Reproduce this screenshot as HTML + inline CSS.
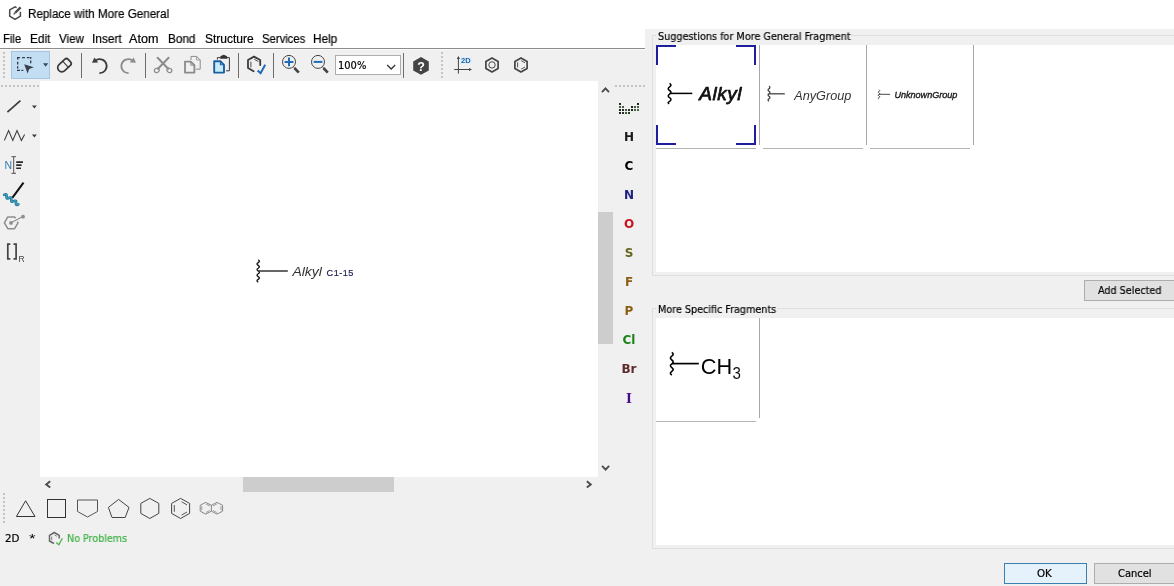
<!DOCTYPE html>
<html><head><meta charset="utf-8"><title>Replace with More General</title>
<style>
html,body{margin:0;padding:0;}
body{width:1174px;height:586px;overflow:hidden;background:#f0f0f0;position:relative;font-family:"Liberation Sans",sans-serif;font-size:12px;color:#000;}
.a{position:absolute;}
.t{position:absolute;white-space:nowrap;line-height:1;transform-origin:0 50%;will-change:transform;-webkit-text-stroke:0.2px currentColor;}
svg{position:absolute;left:0;top:0;overflow:visible;}
.el{position:absolute;left:613px;width:32px;text-align:center;font-family:"DejaVu Sans","Liberation Sans",sans-serif;font-weight:bold;font-size:12px;line-height:1;will-change:transform;}
.sep{position:absolute;width:1px;top:53px;height:25px;background:#6e6e6e;}
.gripv{position:absolute;width:2px;background:repeating-linear-gradient(to bottom,#c4c4c4 0 2px,transparent 2px 4px);}
.griph{position:absolute;height:2px;background:repeating-linear-gradient(to right,#c4c4c4 0 2px,transparent 2px 4px);}
.btn{position:absolute;box-sizing:border-box;border:1px solid #adadad;background:#e1e1e1;}
.vl{position:absolute;width:1px;height:100px;background:#a8a8a8;}
.hl{position:absolute;height:1px;width:100px;background:#b4b4b4;}
</style></head><body>
<!-- title bar -->
<div class="a" id="titlebar" style="left:0;top:0;width:1174px;height:29px;background:#fff;"></div>
<!-- menu bar -->
<div class="a" id="menubar" style="left:0;top:29px;width:645px;height:19px;background:#fff;"></div>
<div class="a" style="left:0;top:48px;width:645px;height:1px;background:#8c8c8c;"></div>
<div class="a" style="left:0;top:49px;width:645px;height:1px;background:#fafafa;"></div>
<!-- top toolbar -->
<div class="gripv" style="left:3px;top:52px;height:27px;"></div>
<div class="a" id="selbtn" style="left:11px;top:51px;width:39px;height:28px;background:#c3ddf3;box-sizing:border-box;border:1px solid #a4c6e6;"></div>
<div class="sep" style="left:81px;"></div>
<div class="sep" style="left:145px;"></div>
<div class="sep" style="left:238px;"></div>
<div class="sep" style="left:273px;"></div>
<div class="sep" style="left:403px;"></div>
<div class="a" id="combo" style="left:335px;top:55px;width:66px;height:20px;box-sizing:border-box;border:1px solid #adadad;background:#fff;"></div>
<div class="gripv" style="left:441px;top:52px;height:27px;"></div>
<!-- left toolbar -->
<div class="griph" style="left:1px;top:85px;width:38px;"></div>
<!-- canvas -->
<div class="a" id="canvas" style="left:40px;top:81px;width:558px;height:396px;background:#fff;"></div>
<!-- scrollbars -->
<div class="a" id="vthumb" style="left:598px;top:212px;width:15px;height:132px;background:#cdcdcd;"></div>
<div class="a" id="hthumb" style="left:243px;top:477px;width:151px;height:15px;background:#cdcdcd;"></div>
<!-- atom toolbar -->
<div class="griph" style="left:615px;top:85px;width:30px;"></div>
<div class="el" style="top:131px;color:#1a1a1a;">H</div>
<div class="el" style="top:160px;color:#000;">C</div>
<div class="el" style="top:189px;color:#20207e;">N</div>
<div class="el" style="top:218px;color:#c8141e;">O</div>
<div class="el" style="top:247px;color:#64641a;">S</div>
<div class="el" style="top:276px;color:#8c5e14;">F</div>
<div class="el" style="top:305px;color:#8c5e14;">P</div>
<div class="el" style="top:334px;color:#188418;">Cl</div>
<div class="el" style="top:363px;color:#5c2a2a;">Br</div>
<div class="el" style="top:393px;color:#4a0a8c;font-family:'DejaVu Serif','Liberation Serif',serif;font-size:12.5px;">I</div>
<!-- bottom toolbar -->
<div class="gripv" style="left:3px;top:493px;height:30px;"></div>
<!-- right panel: group boxes -->
<div class="a" id="grp1" style="left:652px;top:35px;width:530px;height:241px;box-sizing:border-box;border:1px solid #dfdfdf;"></div>
<div class="a" style="left:656px;top:30px;width:195px;height:14px;background:#f0f0f0;"></div>
<div class="a" id="list1" style="left:656px;top:45px;width:518px;height:227px;background:#fff;"></div>
<div class="a" id="grp2" style="left:652px;top:308px;width:530px;height:241px;box-sizing:border-box;border:1px solid #dfdfdf;"></div>
<div class="a" style="left:656px;top:302px;width:121px;height:14px;background:#f0f0f0;"></div>
<div class="a" id="list2" style="left:656px;top:318px;width:518px;height:227px;background:#fff;"></div>
<div class="vl" style="left:759px;top:45px;"></div><div class="hl" style="left:656px;top:148px;"></div>
<div class="vl" style="left:866px;top:45px;"></div><div class="hl" style="left:763px;top:148px;"></div>
<div class="vl" style="left:973px;top:45px;"></div><div class="hl" style="left:870px;top:148px;"></div>
<div class="vl" style="left:759px;top:318px;"></div><div class="hl" style="left:656px;top:421px;"></div>
<!-- buttons -->
<div class="btn" style="left:1084px;top:280px;width:100px;height:21px;"></div>
<div class="btn" style="left:1004px;top:563px;width:83px;height:21px;border-color:#3c7fb1;background:#e5f1fb;"></div>
<div class="btn" style="left:1094px;top:563px;width:90px;height:21px;"></div>
<div class="t" id="star" style="left:28.8px;top:532px;font-size:13.5px;transform:scaleX(1.25);-webkit-text-stroke:0;">*</div>
<div class="t" style="left:27.9px;top:8px;font-size:12px;transform:scaleX(0.971);">Replace with More General</div>
<div class="t" style="left:2.9px;top:33px;font-size:12px;transform:scaleX(0.939);">File</div>
<div class="t" style="left:29.7px;top:33px;font-size:12px;transform:scaleX(0.984);">Edit</div>
<div class="t" style="left:58.5px;top:33px;font-size:12px;transform:scaleX(0.964);">View</div>
<div class="t" style="left:91.8px;top:33px;font-size:12px;transform:scaleX(0.986);">Insert</div>
<div class="t" style="left:128.6px;top:33px;font-size:12px;transform:scaleX(1.048);">Atom</div>
<div class="t" style="left:167.9px;top:33px;font-size:12px;transform:scaleX(0.978);">Bond</div>
<div class="t" style="left:204.7px;top:33px;font-size:12px;">Structure</div>
<div class="t" style="left:261.5px;top:33px;font-size:12px;transform:scaleX(0.941);">Services</div>
<div class="t" style="left:312.8px;top:33px;font-size:12px;transform:scaleX(0.978);">Help</div>
<div class="t" style="left:338.4px;top:60px;font-size:11px;font-family:'DejaVu Sans Condensed','Liberation Sans',sans-serif;">100%</div>
<div class="t" style="left:657.6px;top:31px;font-size:11px;transform:scaleX(0.976);font-family:'DejaVu Sans Condensed','Liberation Sans',sans-serif;">Suggestions for More General Fragment</div>
<div class="t" style="left:657.5px;top:304px;font-size:11px;transform:scaleX(0.971);font-family:'DejaVu Sans Condensed','Liberation Sans',sans-serif;">More Specific Fragments</div>
<div class="t" style="left:1097.9px;top:285px;font-size:11px;transform:scaleX(0.973);font-family:'DejaVu Sans Condensed','Liberation Sans',sans-serif;">Add Selected</div>
<div class="t" style="left:1036.8px;top:568px;font-size:11px;transform:scaleX(1.038);font-family:'DejaVu Sans Condensed','Liberation Sans',sans-serif;">OK</div>
<div class="t" style="left:1117.6px;top:568px;font-size:11px;font-family:'DejaVu Sans Condensed','Liberation Sans',sans-serif;">Cancel</div>
<div class="t" style="left:4.7px;top:533px;font-size:11px;transform:scaleX(1.042);font-family:'DejaVu Sans Condensed','Liberation Sans',sans-serif;">2D</div>
<div class="t" style="left:66.5px;top:533px;font-size:11px;transform:scaleX(0.966);color:#3cb043;font-family:'DejaVu Sans Condensed','Liberation Sans',sans-serif;">No Problems</div>
<svg id="icons" width="1174" height="586" viewBox="0 0 1174 586">
<!-- title icon -->
<g id="ticon" transform="translate(0 0.6)" fill="none" stroke="#484848" stroke-linejoin="round" stroke-linecap="butt">
<path d="M16.6 7 L15.1 6.2 L9.7 9.3 L9.7 15.6 L15.1 18.7 L20.4 15.6 L20.4 11.2" stroke-width="1.5"/>
<path d="M15.2 12.2 L20.6 6.8" stroke-width="2.3"/>
<path d="M13.2 14.2 L14.2 11.6 L15.8 13.2 Z" fill="#484848" stroke="none"/>
</g>
<!-- select tool -->
<g id="i-select">
<path d="M17 57.7 H19.9 M22.1 57.7 H24.9 M26.9 57.7 H29.5 M30 57.7 H31.3 M17.65 57.05 V59.6 M17.65 61.8 V64.5 M17.65 66.2 V68.5 M17.65 69.7 V71 M17 70.4 H20 M21.4 70.4 H23.3 M30.7 57.05 V58.7 M30.7 60.6 V63.2" fill="none" stroke="#2e3a48" stroke-width="1.3"/>
<path d="M24.2 64.3 L33.8 67.2 L29.2 69 L27.6 73.4 Z" fill="#39414d"/>
<path d="M43 63.2 L48.2 63.2 L45.6 66.8 Z" fill="#2d4a6b"/>
</g>
<!-- eraser -->
<g id="i-eraser" transform="translate(64.1 65.6) rotate(-43)" fill="none" stroke="#3a3a3a" stroke-width="1.7">
<path d="M-3 -4.2 L4.7 -4.2 Q7.2 -4.2 7.2 -1.7 L7.2 1.7 Q7.2 4.2 4.7 4.2 L-3 4.2 A4.2 4.2 0 0 1 -3 -4.2 Z"/>
<path d="M1.9 -4.2 L1.9 4.2" stroke-width="1.1"/>
</g>
<!-- undo -->
<g id="i-undo">
<path d="M95.9 60.2 A7 7 0 1 1 99.4 73.1" fill="none" stroke="#3c3c3c" stroke-width="1.8"/>
<path d="M92 62.8 L94.4 57.4 L98.2 62.6 Z" fill="#3c3c3c"/>
</g>
<!-- redo -->
<g id="i-redo">
<path d="M132.1 60.2 A7 7 0 1 0 128.6 73.1" fill="none" stroke="#8c8c8c" stroke-width="1.8"/>
<path d="M136 62.8 L133.6 57.4 L129.8 62.6 Z" fill="#8c8c8c"/>
</g>
<!-- cut -->
<g id="i-cut" fill="none" stroke="#8c8c8c">
<path d="M157.6 57.8 L168.2 68.8 M168.6 57.8 L158 68.8" stroke-width="2" stroke-linecap="round"/>
<ellipse cx="156.8" cy="70.4" rx="2.5" ry="2.1" stroke-width="1.2" transform="rotate(-30 156.8 70.4)"/>
<ellipse cx="169.4" cy="70.4" rx="2.5" ry="2.1" stroke-width="1.2" transform="rotate(30 169.4 70.4)"/>
</g>
<!-- copy -->
<g id="i-copy" fill="none" stroke="#8a8a8a" stroke-linejoin="round">
<path d="M191 60 L191 56.4 L196.6 56.4 L200.2 60 L200.2 69.2 L196 69.2" stroke-width="1"/>
<path d="M196.6 56.4 L196.6 60 L200.2 60" stroke-width="0.8"/>
<path d="M185 61.6 L190.8 61.6 L194.4 65.2 L194.4 72.6 L185 72.6 Z" stroke-width="1.8" fill="#f0f0f0"/>
<path d="M190.8 61.6 L190.8 65.2 L194.4 65.2" stroke-width="1"/>
</g>
<!-- paste -->
<g id="i-paste" fill="none" stroke-linejoin="round">
<path d="M217.4 59.6 L217.4 57.6 L220.6 57.6 M226.8 57.6 L229.4 57.6 L229.4 70.8 L226 70.8" stroke="#3a3a3a" stroke-width="1"/>
<path d="M220.2 58.8 L220.2 56.8 Q220.8 55.6 222.2 55.6 Q223.7 53.8 225.2 55.6 Q226.6 55.6 227.2 56.8 L227.2 58.8 Z" fill="#333" stroke="none"/>
<path d="M214.2 61.2 L220.4 61.2 L224 64.8 L224 72.6 L214.2 72.6 Z" stroke="#1b5fa3" stroke-width="1.9" fill="#c9ecfd"/>
<path d="M220.4 61.2 L220.4 64.8 L224 64.8" stroke="#1b5fa3" stroke-width="1.1"/>
</g>
<!-- check structure -->
<g id="i-check" fill="none" stroke-linejoin="round" stroke-linecap="round">
<path d="M260.2 65 L260.2 60 L254 56.6 L248 60 L248 68 L253.6 71.2" stroke="#3a3a3a" stroke-width="1.8"/>
<path d="M250.9 62 L250.9 67 M254.6 59.4 L258 61.4" stroke="#3a3a3a" stroke-width="0.9"/>
<path d="M257.6 70.4 L260.6 73.2 L265.2 64.8" stroke="#1e6bb8" stroke-width="2" stroke-linecap="butt" stroke-linejoin="miter"/>
</g>
<!-- zoom in -->
<g id="i-zin" fill="none">
<circle cx="289" cy="61.9" r="6.5" stroke="#444" stroke-width="1"/>
<path d="M284.6 61.9 L293.4 61.9 M289 57.5 L289 66.3" stroke="#1e6bb8" stroke-width="2"/>
<path d="M294.4 68 L298.8 72.6" stroke="#444" stroke-width="2.6"/>
<path d="M293.2 66.6 L294.8 68.2" stroke="#444" stroke-width="1"/>
</g>
<!-- zoom out -->
<g id="i-zout" fill="none">
<circle cx="318" cy="61.9" r="6.5" stroke="#444" stroke-width="1"/>
<path d="M313.6 61.9 L322.4 61.9" stroke="#1e6bb8" stroke-width="2"/>
<path d="M323.4 68 L327.8 72.6" stroke="#444" stroke-width="2.6"/>
<path d="M322.2 66.6 L323.8 68.2" stroke="#444" stroke-width="1"/>
</g>
<!-- combo chevron -->
<path d="M387.2 65 L391.2 69 L395.2 65" fill="none" stroke="#333" stroke-width="1.3"/>
<!-- help -->
<g id="i-help">
<path d="M421 57 L428.8 61.4 L428.8 70.4 L421 74.8 L413.2 70.4 L413.2 61.4 Z" fill="#444"/>
<text x="421" y="70.6" text-anchor="middle" font-family="Liberation Sans, sans-serif" font-weight="bold" font-size="12.5" fill="#fff">?</text>
</g>
<!-- 2D clean -->
<g id="i-2d">
<rect x="460" y="57" width="12" height="7" fill="#e0f1fb"/>
<path d="M458.4 73.6 L458.4 57.2 M454.2 69.5 L471 69.5" fill="none" stroke="#444" stroke-width="1"/>
<path d="M456.8 59 L458.4 56 L460 59 Z M469 68 L472 69.5 L469 71 Z" fill="#444"/>
<text x="461" y="62.9" font-family="Liberation Sans, sans-serif" font-weight="bold" font-size="6.6" fill="#1f5fa6" textLength="9.6" lengthAdjust="spacingAndGlyphs">2D</text>
</g>
<!-- aromatize -->
<g id="i-arom" fill="none" stroke="#444">
<path d="M492 57.9 L498.1 61.4 L498.1 68.4 L492 71.9 L485.9 68.4 L485.9 61.4 Z" stroke-width="1.7" stroke-linejoin="round"/>
<circle cx="492" cy="64.9" r="3.2" stroke-width="1"/>
</g>
<!-- dearomatize -->
<g id="i-dearom" fill="none" stroke="#444">
<path d="M521 57.9 L527.1 61.4 L527.1 68.4 L521 71.9 L514.9 68.4 L514.9 61.4 Z" stroke-width="1.7" stroke-linejoin="round"/>
<path d="M517.6 62.4 L517.6 67.4 M521.2 60.6 L525 62.8 M521.2 69.2 L525 67" stroke-width="0.9"/>
</g>
<!-- left toolbar -->
<g id="i-bond">
<path d="M7.4 112.2 L20.4 100.6" stroke="#3c3c3c" stroke-width="1.7" fill="none"/>
<path d="M32 105.4 L36.8 105.4 L34.4 108.4 Z" fill="#3c3c3c"/>
</g>
<g id="i-chain">
<path d="M4.4 140.4 L8.6 130.6 L12.8 140.4 L17 130.6 L21.4 140.4 L24.6 134.6" stroke="#3c3c3c" stroke-width="1.1" fill="none" stroke-linejoin="miter"/>
<path d="M32 134.4 L36.8 134.4 L34.4 137.4 Z" fill="#3c3c3c"/>
</g>
<g id="i-text">
<text x="4.4" y="168.8" font-family="Liberation Sans, sans-serif" font-size="10.5" fill="#2f7db5">N</text>
<path d="M13.7 156.8 L13.7 173.2 M11.4 156.7 L16 156.7 M11.4 173.3 L16 173.3" stroke="#5a5050" stroke-width="1" fill="none"/>
<path d="M16.2 162.1 L23 162.1 M16.2 165.1 L21.6 165.1 M16.2 168.2 L21 168.2" stroke="#2a2a2a" stroke-width="1.6" fill="none"/>
</g>
<g id="i-attach">
<path d="M23.5 182.6 L12.3 197.8" stroke="#111" stroke-width="2" fill="none"/>
<path d="M4.2 194.8 L4.7 194.6 L5.2 194.4 L5.6 194.3 L5.9 194.3 L6.2 194.4 L6.4 194.6 L6.5 194.9 L6.6 195.3 L6.6 195.9 L6.6 196.4 L6.5 196.9 L6.5 197.5 L6.6 197.9 L6.7 198.2 L6.9 198.4 L7.2 198.5 L7.5 198.5 L8.0 198.4 L8.4 198.2 L8.9 198.0 L9.4 197.8 L9.9 197.6 L10.3 197.5 L10.7 197.5 L11.0 197.6 L11.2 197.8 L11.3 198.1 L11.3 198.5 L11.3 199.1 L11.3 199.6 L11.3 200.1 L11.3 200.7 L11.3 201.1 L11.4 201.4 L11.6 201.6 L11.9 201.7 L12.3 201.7 L12.7 201.6 L13.2 201.4 L13.7 201.2 L14.2 201.0 L14.6 200.8 L15.1 200.7 L15.4 200.7 L15.7 200.8 L15.9 201.0 L16.0 201.3 L16.1 201.7 L16.1 202.3 L16.0 202.8 L16.0 203.3 L16.0 203.9 L16.1 204.3 L16.2 204.6 L16.4 204.8 L16.7 204.9 L17.0 204.9 L17.4 204.8 L17.9 204.6 L18.4 204.4" stroke="#1f7594" stroke-width="2.6" fill="none" stroke-linecap="round" stroke-linejoin="round"/>
<path d="M4.2 194.8 L4.7 194.6 L5.2 194.4 L5.6 194.3 L5.9 194.3 L6.2 194.4 L6.4 194.6 L6.5 194.9 L6.6 195.3 L6.6 195.9 L6.6 196.4 L6.5 196.9 L6.5 197.5 L6.6 197.9 L6.7 198.2 L6.9 198.4 L7.2 198.5 L7.5 198.5 L8.0 198.4 L8.4 198.2 L8.9 198.0 L9.4 197.8 L9.9 197.6 L10.3 197.5 L10.7 197.5 L11.0 197.6 L11.2 197.8 L11.3 198.1 L11.3 198.5 L11.3 199.1 L11.3 199.6 L11.3 200.1 L11.3 200.7 L11.3 201.1 L11.4 201.4 L11.6 201.6 L11.9 201.7 L12.3 201.7 L12.7 201.6 L13.2 201.4 L13.7 201.2 L14.2 201.0 L14.6 200.8 L15.1 200.7 L15.4 200.7 L15.7 200.8 L15.9 201.0 L16.0 201.3 L16.1 201.7 L16.1 202.3 L16.0 202.8 L16.0 203.3 L16.0 203.9 L16.1 204.3 L16.2 204.6 L16.4 204.8 L16.7 204.9 L17.0 204.9 L17.4 204.8 L17.9 204.6 L18.4 204.4" stroke="#4fb6d6" stroke-width="1" fill="none" stroke-linecap="round" stroke-linejoin="round"/>
</g>
<g id="i-rgroup" stroke="#8e8e8e" fill="none">
<path d="M15.6 218.2 L14.6 216.9 L7.8 216.9 L4.4 222.8 L7.8 228.7 L14.6 228.7 L18 222.8 L17.4 221.6" stroke-width="1.5" stroke-linejoin="round"/>
<path d="M11 222.8 L23 216.6" stroke-width="1.1"/>
<circle cx="11" cy="222.9" r="1.9" fill="#8e8e8e" stroke="none"/>
<circle cx="23" cy="216.7" r="1.9" fill="#8e8e8e" stroke="none"/>
</g>
<g id="i-bracket">
<path d="M10.3 244.2 L7.8 244.2 L7.8 258.8 L10.3 258.8 M13.5 244.2 L16.1 244.2 L16.1 258.8 L13.5 258.8" stroke="#444" stroke-width="1.7" fill="none"/>
<text x="18.6" y="261.8" font-family="Liberation Sans, sans-serif" font-size="8.5" fill="#444">R</text>
</g>
<!-- scroll arrows -->
<g fill="none" stroke="#4c4c4c" stroke-width="1.9">
<path d="M602 92.2 L605.5 88.4 L609 92.2"/>
<path d="M602.1 465.8 L605.6 469.6 L609.1 465.8"/>
<path d="M50.2 481.2 L46.2 484.4 L50.2 487.6"/>
<path d="M586.8 481.2 L590.8 484.4 L586.8 487.6"/>
</g>
<!-- bottom toolbar shapes -->
<g id="shapes" fill="none" stroke="#333" stroke-width="1">
<path d="M25.6 500.8 L35 516.5 L16.4 516.5 Z"/>
<rect x="47.5" y="499.5" width="18" height="18"/>
<path d="M77.5 500 L97.5 500 L97.5 511.5 L87.5 517 L77.5 511.5 Z" stroke="#555"/>
<path d="M118.6 499.4 L129 507.4 L125.2 517.5 L112 517.5 L108.4 507.4 Z" stroke="#444"/>
<path d="M149.8 498.4 L158.8 503.4 L158.8 513.4 L149.8 518.5 L140.8 513.4 L140.8 503.4 Z" stroke="#444"/>
<path d="M180.6 498.4 L189.6 503.4 L189.6 513.4 L180.6 518.5 L171.6 513.4 L171.6 503.4 Z" stroke="#444"/>
<path d="M174.3 505 L174.3 511.8 M181.6 501.8 L187 504.9 M181.6 515.1 L187 512" stroke="#444" stroke-width="0.9"/>
<g stroke="#7a7a7a" stroke-width="0.9">
<path d="M205.7 502.4 L211.4 505.3 L211.4 511.2 L205.7 514.1 L200.2 511.2 L200.2 505.3 Z"/>
<path d="M211.4 505.3 L217 502.4 L222.6 505.3 L222.6 511.2 L217 514.1 L211.4 511.2"/>
<path d="M201.8 506.2 L201.8 510.3 M206 504 L209.8 506 M206 512.5 L209.8 510.5 M221 506.2 L221 510.3 M216.8 504 L213 506 M216.8 512.5 L213 510.5" stroke-width="0.7"/>
</g>
</g>
<!-- status icon -->
<g id="i-status" fill="none" stroke-linejoin="round">
<path d="M59.2 538.6 L59.2 535.4 L54.3 532.5 L49.5 535.4 L49.5 541 L54 543.5" stroke="#666" stroke-width="1.5"/>
<path d="M51.7 536.6 L51.7 540.2 M54.6 535 L56.8 536.3" stroke="#666" stroke-width="0.8"/>
<path d="M56.2 542.4 L58.9 544.8 L62.3 538.2" stroke="#55b458" stroke-width="1.4"/>
</g>
<!-- periodic table icon -->
<g id="i-ptable">
<rect x="619" y="103" width="2" height="2" fill="#222a22"/><rect x="637" y="103" width="2" height="2" fill="#1c261c"/><rect x="619" y="106" width="2" height="2" fill="#445c44"/><rect x="622" y="106" width="2" height="2" fill="#4a624a"/><rect x="631" y="106" width="2" height="2" fill="#1c261c"/><rect x="634" y="106" width="2" height="2" fill="#445c44"/><rect x="637" y="106" width="2" height="2" fill="#4a624a"/><rect x="619" y="109" width="2" height="2" fill="#222a22"/><rect x="622" y="109" width="2" height="2" fill="#263026"/><rect x="625" y="109" width="2" height="2" fill="#3f5a3f"/><rect x="628" y="109" width="2" height="2" fill="#1e3a1e"/><rect x="631" y="109" width="2" height="2" fill="#1c261c"/><rect x="634" y="109" width="2" height="2" fill="#445c44"/><rect x="637" y="109" width="2" height="2" fill="#4a624a"/><rect x="619" y="112" width="2" height="2" fill="#222a22"/><rect x="622" y="112" width="2" height="2" fill="#263026"/><rect x="625" y="112" width="2" height="2" fill="#3f5a3f"/><rect x="628" y="112" width="2" height="2" fill="#1e3a1e"/>
</g>
<!-- canvas structure -->
<g id="s-canvas">
<path d="M258.2 259.8 q2.4 1.4 0 2.8 q-2.4 1.4 0 2.8 q2.4 1.4 0 2.8 q-2.4 1.4 0 2.8 q2.4 1.4 0 2.8 q-2.4 1.4 0 2.8 q2.4 1.4 0 2.8 q-2.4 1.4 0 2.8" fill="none" stroke="#111" stroke-width="1.3"/>
<path d="M258.2 271 L287.8 271" stroke="#333" stroke-width="1.5"/>
<text x="292.4" y="275.5" font-family="Liberation Sans, sans-serif" font-style="italic" font-size="13.4" fill="#333" textLength="29.6" lengthAdjust="spacingAndGlyphs">Alkyl</text>
<text x="326.6" y="275.6" font-family="Liberation Sans, sans-serif" font-size="9.2" fill="#1c1c55" stroke="#1c1c55" stroke-width="0.2" textLength="26.8" lengthAdjust="spacing">C1-15</text>
</g>
<!-- list1 cell1 -->
<g id="s-c1">
<path d="M657 65 L657 46 L676 46 M736 46 L755 46 L755 65 M755 125 L755 144 L736 144 M676 144 L657 144 L657 125" fill="none" stroke="#1e1e9e" stroke-width="2" stroke-linecap="butt"/>
<path d="M669.6 83.3 q2.8 1.8 0 3.6 q-2.8 1.8 0 3.6 q2.8 1.8 0 3.6 q-2.8 1.8 0 3.6 q2.8 1.8 0 3.6 q-2.8 1.4 -0.4 2.4" fill="none" stroke="#000" stroke-width="1.5"/>
<path d="M669.8 93.4 L692.3 93.4" stroke="#000" stroke-width="1.5"/>
<text x="699.2" y="99.8" font-family="Liberation Sans, sans-serif" font-style="italic" font-size="19" fill="#111" stroke="#111" stroke-width="0.75" stroke-linejoin="round" letter-spacing="0.55">Alkyl</text>
</g>
<!-- list1 cell2 -->
<g id="s-c2">
<path d="M769 86.3 q2 1.25 0 2.5 q-2 1.25 0 2.5 q2 1.25 0 2.5 q-2 1.25 0 2.5 q2 1.25 0 2.5 q-2 1.25 0 2.5" fill="none" stroke="#333" stroke-width="1.1"/>
<path d="M769 93.8 L784.8 93.8" stroke="#444" stroke-width="1.3"/>
<text x="794.2" y="99.7" font-family="Liberation Sans, sans-serif" font-style="italic" font-size="13.3" fill="#333" textLength="57.2" lengthAdjust="spacingAndGlyphs">AnyGroup</text>
</g>
<!-- list1 cell3 -->
<g id="s-c3">
<path d="M879 89.8 q1.5 0.8 0 1.55 q-1.5 0.8 0 1.55 q1.5 0.8 0 1.55 q-1.5 0.8 0 1.55 q1.5 0.8 0 1.55 q-1.5 0.8 0 1.55" fill="none" stroke="#222" stroke-width="0.9"/>
<path d="M879 94.3 L890 94.3" stroke="#333" stroke-width="0.9"/>
<text x="894.4" y="97.8" font-family="Liberation Sans, sans-serif" font-style="italic" font-size="9.6" fill="#222" stroke="#222" stroke-width="0.4" textLength="63" lengthAdjust="spacingAndGlyphs">UnknownGroup</text>
</g>
<!-- list2 cell1 -->
<g id="s-ch3">
<path d="M671.8 352.4 q2.8 1.9 0 3.8 q-2.8 1.9 0 3.8 q2.8 1.9 0 3.8 q-2.8 1.9 0 3.8 q2.8 1.9 0 3.8 q-2.8 1.9 0 3.8" fill="none" stroke="#000" stroke-width="1.6"/>
<path d="M672 363.6 L698.8 363.6" stroke="#000" stroke-width="1.7"/>
<text x="700.7" y="373.6" font-family="Liberation Sans, sans-serif" font-size="22" fill="#000" textLength="31.4" lengthAdjust="spacingAndGlyphs">CH</text>
<text x="732.6" y="378.8" font-family="Liberation Sans, sans-serif" font-size="16.6" fill="#111" textLength="8.4" lengthAdjust="spacingAndGlyphs">3</text>
</g>

</svg>
</body></html>
